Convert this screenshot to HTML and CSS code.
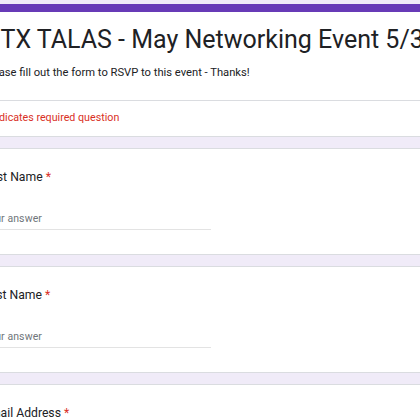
FILE: index.html
```html
<!DOCTYPE html>
<html lang="en">
<head>
    <meta charset="UTF-8">
    <meta name="viewport" content="width=device-width, initial-scale=1.0">
    <title>NTX TALAS - May Networking Event 5/31</title>
    <link rel="stylesheet" href="styles.css">
</head>
<body>
    <div class="form">
        <div class="card header-card">
            <div class="header-main">
                <h1 class="form-title">NTX TALAS - May Networking Event 5/31</h1>
                <p class="form-desc">Please fill out the form to RSVP to this event - Thanks!</p>
            </div>
            <div class="header-note">* Indicates required question</div>
        </div>

        <div class="card question">
            <div class="question-title">First Name <span class="required">*</span></div>
            <div class="answer">Your answer</div>
        </div>

        <div class="card question">
            <div class="question-title">Last Name <span class="required">*</span></div>
            <div class="answer">Your answer</div>
        </div>

        <div class="card question">
            <div class="question-title">Email Address <span class="required">*</span></div>
            <div class="answer">Your answer</div>
        </div>
    </div>
</body>
</html>
```

FILE: styles.css
```css
* {
    margin: 0;
    padding: 0;
    box-sizing: border-box;
}

body {
    font-family: Roboto, "Liberation Sans", Arial, sans-serif;
    background: #f0ebf8;
    color: #202124;
    overflow: hidden;
}

.form {
    width: 520px;
    margin-left: -36px;
    padding-top: 4px;
    display: flex;
    flex-direction: column;
    gap: 11px;
}

.card {
    background: white;
    border: 1px solid #dadce0;
    border-radius: 6px;
}

.header-card {
    border-top: 8px solid #673ab7;
}

.header-main {
    padding: 13px 18px 19px;
}

.form-title {
    font-size: 25px;
    line-height: 30px;
    font-weight: 400;
    margin-bottom: 10px;
}

.form-desc {
    font-size: 11.2px;
    line-height: 16px;
}

.header-note {
    border-top: 1px solid #dadce0;
    padding: 10px 18px 11px;
    font-size: 10.7px;
    line-height: 14px;
    color: #d93025;
}

.question {
    padding: 19px 18px 24px;
}

.question-title {
    font-size: 12.2px;
    line-height: 18px;
}

.required {
    color: #d93025;
}

.answer {
    width: 228px;
    margin-top: 20px;
    padding: 5px 0 2px;
    font-size: 10.5px;
    line-height: 16px;
    letter-spacing: 0.1px;
    color: #70757a;
    border-bottom: 1px solid #e3e3e3;
}
```
